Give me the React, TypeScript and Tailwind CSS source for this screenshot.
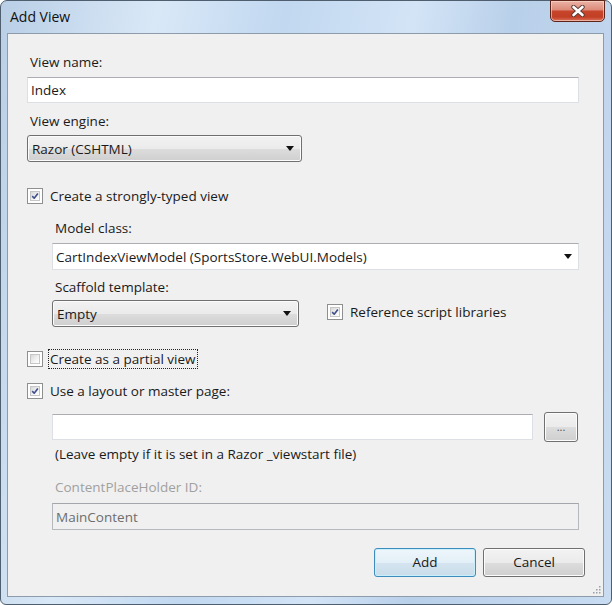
import React from 'react';

const font = { fontFamily: '"Segoe UI", "Open Sans", "Noto Sans", sans-serif' };

const Check = ({ checked }: { checked: boolean }) => (
    <div className="w-[16px] h-[16px] shrink-0 border border-[#8e8f8f] bg-white p-[2px]">
        <div className="w-full h-full border border-[#c6c6c6] bg-[linear-gradient(135deg,#d8d8d8_0%,#f3f3f3_60%,#ffffff_100%)] flex items-center justify-center">
            {checked && (
                <svg width="10" height="10" viewBox="0 0 10 10">
                    <path d="M1.5 5.2 L4 7.8 L8.6 1.8" fill="none" stroke="#3d4f8c" strokeWidth="2" strokeLinejoin="round" />
                </svg>
            )}
        </div>
    </div>
);

const Arrow = () => (
    <svg width="8" height="5" viewBox="0 0 8 5" className="shrink-0">
        <polygon points="0,0 8,0 4,5" fill="#111" />
    </svg>
);

const Dropdown = ({ value, className }: { value: string; className: string }) => (
    <div className={`h-[27px] rounded-[3px] border border-[#707070] shadow-[inset_0_0_0_1px_#fcfcfc] bg-[linear-gradient(#f2f2f2_0%,#ebebeb_50%,#dddddd_50%,#cfcfcf_100%)] flex items-center justify-between pl-[4px] pr-[7px] ${className}`}>
        <span>{value}</span>
        <Arrow />
    </div>
);

const TextBox = ({ value, className }: { value?: string; className: string }) => (
    <div className={`h-[26px] bg-white border border-[#dcdfe4] border-t-[#abadb3] flex items-center px-[3px] ${className}`}>
        {value}
    </div>
);

const App: React.FC = () => {
    return (
        <div className="w-[612px] h-[605px] bg-white text-[13.5px] leading-[20px] text-[#1a1a1a]" style={font}>
            <div className="relative h-full rounded-t-[7px] rounded-b-[6px] border border-[#4f5f70] bg-[linear-gradient(100deg,#b9cfe6_0%,#d9e8f7_22%,#c1d8f0_40%,#d3e4f6_58%,#b9d0ea_72%,#c9dcf1_100%)] flex flex-col pl-[6px] pr-[7px] pb-[7px]">
                {/* title bar */}
                <div className="h-[32px] flex items-start justify-between">
                    <div className="pl-[3px] pt-[6px] text-[14px] text-[#111]">Add View</div>
                    <div className="w-[55px] h-[22px] -mt-[1px] mr-[-1px] rounded-b-[5px] border border-[#5d2419] bg-[linear-gradient(#eab3a6_0%,#dc8a78_45%,#c7452a_50%,#c23f25_80%,#d9745c_100%)] shadow-[inset_0_0_0_1px_rgba(255,220,210,0.6)] flex items-center justify-center">
                        <svg width="16" height="12" viewBox="0 0 16 12">
                            <path d="M3.5 2 L12.5 10 M12.5 2 L3.5 10" stroke="#5a3a35" strokeWidth="4.4" strokeLinecap="round" />
                            <path d="M3.5 2 L12.5 10 M12.5 2 L3.5 10" stroke="#ffffff" strokeWidth="2.6" strokeLinecap="round" />
                        </svg>
                    </div>
                </div>

                {/* client area */}
                <div className="relative flex-1 border border-[#8e9baa] bg-[#f0f0f0] px-[19px] pt-[18px] flex flex-col">
                    <div className="pl-[3px]">View name:</div>
                    <TextBox value="Index" className="mt-[5px] mr-[5px]" />

                    <div className="pl-[3px] mt-[8px]">View engine:</div>
                    <Dropdown value="Razor (CSHTML)" className="mt-[4px] w-[275px]" />

                    <div className="flex items-center gap-[7px] mt-[24px]">
                        <Check checked />
                        <span>Create a strongly-typed view</span>
                    </div>

                    <div className="pl-[25px] flex flex-col">
                        <div className="pl-[3px] mt-[12px]">Model class:</div>
                        <div className="mt-[5px] mr-[5px] h-[27px] bg-white border border-[#dcdfe4] border-t-[#abadb3] flex items-center justify-between pl-[3px] pr-[6px]">
                            <span>CartIndexViewModel (SportsStore.WebUI.Models)</span>
                            <Arrow />
                        </div>

                        <div className="pl-[3px] mt-[7px]">Scaffold template:</div>
                        <div className="mt-[3px] flex items-center">
                            <Dropdown value="Empty" className="w-[247px] h-[26px]" />
                            <div className="flex items-center gap-[7px] ml-[28px] mt-[-3px]">
                                <Check checked />
                                <span>Reference script libraries</span>
                            </div>
                        </div>
                    </div>

                    <div className="flex items-center gap-[5px] mt-[22px]">
                        <Check checked={false} />
                        <span className="border border-dotted border-[#222] px-[1px] leading-[18px]">Create as a partial view</span>
                    </div>

                    <div className="flex items-center gap-[7px] mt-[12px]">
                        <Check checked />
                        <span>Use a layout or master page:</span>
                    </div>

                    <div className="pl-[25px] flex flex-col">
                        <div className="mt-[11px] flex items-center h-[30px]">
                            <TextBox className="flex-1" />
                            <div className="ml-[11px] mr-[6px] w-[34px] h-[30px] rounded-[3px] border border-[#707070] shadow-[inset_0_0_0_1px_#fcfcfc] bg-[linear-gradient(#f2f2f2_0%,#ebebeb_50%,#dddddd_50%,#cfcfcf_100%)] flex items-center justify-center text-[11px] text-[#555] leading-none pb-[2px]">
                                ...
                            </div>
                        </div>
                        <div className="pl-[3px] mt-[2px]">(Leave empty if it is set in a Razor _viewstart file)</div>

                        <div className="pl-[3px] mt-[13px] text-[#a0a0a0]">ContentPlaceHolder ID:</div>
                        <div className="mt-[6px] mr-[5px] h-[27px] border border-[#b5b9be] border-t-[#a3a6ab] bg-[#f0f0f0] flex items-center px-[3px] text-[#6d6d6d]">
                            MainContent
                        </div>
                    </div>

                    <div className="mt-[18px] -mr-[1px] flex justify-end gap-[7px]">
                        <div className="w-[102px] h-[29px] rounded-[3px] border border-[#3c8dbe] shadow-[inset_0_0_0_1px_#c9eefc] bg-[linear-gradient(#eef6fb_0%,#e3eff7_50%,#d4e5f0_50%,#c9dce9_100%)] flex items-center justify-center pb-[1px]">
                            Add
                        </div>
                        <div className="w-[102px] h-[29px] rounded-[3px] border border-[#707070] shadow-[inset_0_0_0_1px_#fcfcfc] bg-[linear-gradient(#f2f2f2_0%,#ebebeb_50%,#dddddd_50%,#cfcfcf_100%)] flex items-center justify-center pb-[1px]">
                            Cancel
                        </div>
                    </div>

                    {/* size grip */}
                    <svg width="10" height="10" viewBox="0 0 10 10" className="absolute right-[2px] bottom-[2px]">
                        {[[8, 2], [5, 5], [8, 5], [2, 8], [5, 8], [8, 8]].map(([x, y]) => (
                            <rect key={`${x}-${y}`} x={x} y={y} width="1.5" height="1.5" fill="#9aa0a6" />
                        ))}
                    </svg>
                </div>
            </div>
        </div>
    );
};

export default App;
